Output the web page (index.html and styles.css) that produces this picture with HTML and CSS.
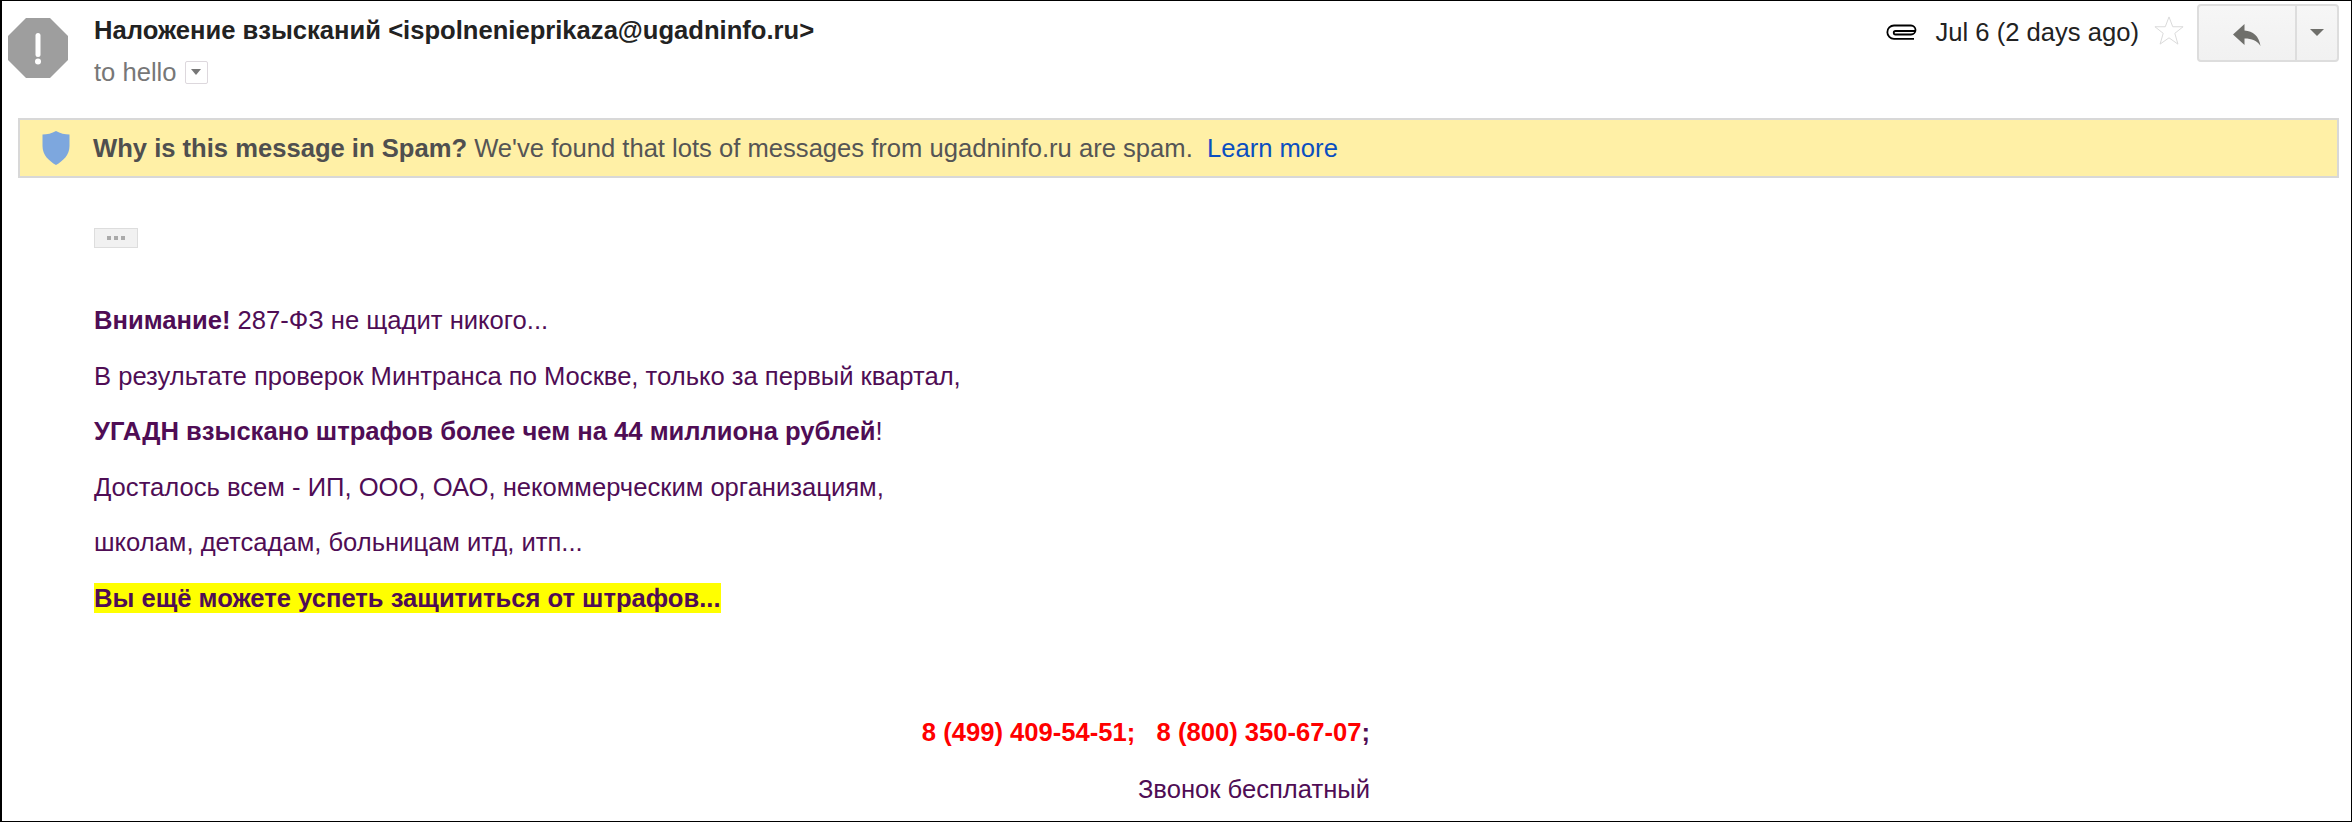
FILE: index.html
```html
<!DOCTYPE html>
<html lang="en">
<head>
    <meta charset="UTF-8">
    <meta name="viewport" content="width=device-width, initial-scale=1.0">
    <title>Spam message</title>
    <link rel="stylesheet" href="styles.css">
</head>
<body>
    <div class="message">
        <!-- Sender row -->
        <div class="header">
            <svg class="avatar" viewBox="0 0 60 60">
                <polygon points="18,0 42,0 60,18 60,42 42,60 18,60 0,42 0,18" fill="#9e9e9e"/>
                <rect x="27.500" y="15" width="5" height="24" rx="2.500" fill="#fff"/>
                <circle cx="30" cy="43.500" r="3" fill="#fff"/>
            </svg>
            <div class="sender">
                <div class="from">Наложение взысканий &lt;ispolnenieprikaza@ugadninfo.ru&gt;</div>
                <div class="to">to hello <span class="details-btn"><span class="arrow-small"></span></span></div>
            </div>
            <div class="meta">
                <svg class="clip" viewBox="0 0 32 16">
                    <path d="M28 14.800H8a6.650 6.650 0 0 1 0-13.300H25a4.500 4.500 0 0 1 0 9H9.500a1.750 1.750 0 0 1 0-3.500H29" fill="none" stroke="#000" stroke-width="1.800"/>
                </svg>
                <span class="date">Jul 6 (2 days ago)</span>
                <svg class="star" viewBox="0 0 32 32">
                    <polygon points="16,1.500 20,12 31,12 22.200,19 25.500,30.500 16,23.800 6.500,30.500 9.800,19 1,12 12,12" fill="#fff" stroke="#d8d8d8" stroke-width="1"/>
                </svg>
                <div class="reply-group">
                    <div class="reply">
                        <svg viewBox="0 0 28 24" class="reply-icon">
                            <path d="M0 11.500L11.500 1V7.500C20 8 26 13 27.500 23C24 17.500 19 15.500 11.500 15.500V22Z" fill="#6f6f6b"/>
                        </svg>
                    </div>
                    <div class="more"><span class="arrow"></span></div>
                </div>
            </div>
        </div>

        <!-- Spam notice -->
        <div class="notice">
            <svg class="shield" viewBox="0 0 28 34">
                <path d="M14 0C18 2.500 23 3.500 27.500 3.500V15C27.500 24 21 30 14 34C7 30 .5 24 .5 15V3.500C5 3.500 10 2.500 14 0Z" fill="#7da7de"/>
            </svg>
            <span><b class="why">Why is this message in Spam?</b> We've found that lots of messages from ugadninfo.ru are spam. &nbsp;<a class="learn" href="#">Learn more</a></span>
        </div>

        <!-- Body -->
        <div class="content">
            <div class="ellipsis"><span></span><span></span><span></span></div>
            <p class="first"><b>Внимание!</b> 287-ФЗ не щадит никого...</p>
            <p>В результате проверок Минтранса по Москве, только за первый квартал,</p>
            <p><b>УГАДН взыскано штрафов более чем на 44 миллиона рублей</b>!</p>
            <p>Досталось всем - ИП, ООО, ОАО, некоммерческим организациям,</p>
            <p>школам, детсадам, больницам итд, итп...</p>
            <p><b class="mark">Вы ещё можете успеть защититься от штрафов...</b></p>
            <div class="contact">
                <p class="phones"><b><span class="red">8 (499) 409-54-51;</span> &nbsp; <span class="red">8 (800) 350-67-07</span>;</b></p>
                <p>Звонок бесплатный</p>
            </div>
        </div>
    </div>
</body>
</html>
```

FILE: styles.css
```css
html, body {
    margin: 0;
    padding: 0;
}

body {
    font-family: 'Liberation Sans', Arial, sans-serif;
    background-color: white;
}

.message {
    box-sizing: border-box;
    width: 2352px;
    height: 822px;
    border: 1px solid #000;
    border-left-width: 2px;
    overflow: hidden;
}

.header {
    display: flex;
    align-items: flex-start;
    padding: 3px 12px 0 6px;
    box-sizing: border-box;
    height: 117px;
}

.avatar {
    width: 60px;
    height: 60px;
    margin-top: 14px;
    flex: none;
}

.sender {
    margin-left: 26px;
    flex: 1;
}

.from {
    font-size: 25.6px;
    font-weight: bold;
    color: #222;
    line-height: 28px;
    margin-top: 12px;
}

.to {
    font-size: 25.6px;
    color: #777;
    line-height: 28px;
    margin-top: 14px;
    display: flex;
    align-items: center;
    gap: 8px;
}

.details-btn {
    box-sizing: border-box;
    width: 23px;
    height: 23px;
    border: 1px solid #ddd8dd;
    border-radius: 2px;
    display: flex;
    align-items: center;
    justify-content: center;
}

.arrow-small {
    border-top: 6px solid #777;
    border-left: 5px solid transparent;
    border-right: 5px solid transparent;
}

.meta {
    display: flex;
    align-items: flex-start;
}

.clip {
    width: 32px;
    height: 16px;
    margin-top: 20px;
}

.date {
    font-size: 25.6px;
    color: #222;
    line-height: 28px;
    margin: 14px 0 0 18px;
}

.star {
    width: 30px;
    height: 31px;
    margin: 11px 13px 0 15px;
}

.reply-group {
    box-sizing: border-box;
    display: flex;
    width: 142px;
    height: 58px;
    border: 2px solid #ddd;
    border-radius: 4px;
    background: linear-gradient(#f6f6f6, #f1f1f1);
}

.reply {
    width: 96px;
    border-right: 2px solid #ddd;
    display: flex;
    justify-content: center;
    padding-top: 17px;
}

.reply-icon {
    width: 28px;
    height: 24px;
}

.more {
    flex: 1;
    display: flex;
    justify-content: center;
    padding-top: 23px;
}

.arrow {
    width: 0;
    height: 0;
    border-top: 7px solid #6f6f6b;
    border-left: 7px solid transparent;
    border-right: 7px solid transparent;
}

.notice {
    box-sizing: border-box;
    display: flex;
    align-items: center;
    height: 60px;
    margin: 0 12px 0 16px;
    border: 2px solid #d8d8d8;
    background-color: #fff0a6;
    font-size: 25.6px;
    color: #555;
}

.shield {
    width: 28px;
    height: 34px;
    margin: 0 23px 0 22px;
    flex: none;
}

.why {
    color: #4f4f4f;
}

.learn {
    color: #0b4fc0;
    text-decoration: none;
}

.content {
    padding-left: 92px;
    font-size: 25.6px;
    color: #4f0d55;
}

.content p {
    margin: 0;
    height: 55.5px;
    line-height: 55.5px;
}

.content p.first {
    margin-top: 45px;
}

.ellipsis {
    box-sizing: border-box;
    width: 44px;
    height: 20px;
    margin-top: 50px;
    background-color: #f1f1f1;
    border: 1px solid #ddd;
    display: flex;
    align-items: center;
    justify-content: center;
    gap: 3px;
}

.ellipsis span {
    width: 4px;
    height: 4px;
    background-color: #aaa;
}

.mark {
    background-color: #ff0;
    padding: 1px 0;
}

.contact {
    width: 1276px;
    margin-top: 78px;
    text-align: right;
}

.contact p {
    height: 57px;
    line-height: 57px;
}

.red {
    color: #f00;
}
```
